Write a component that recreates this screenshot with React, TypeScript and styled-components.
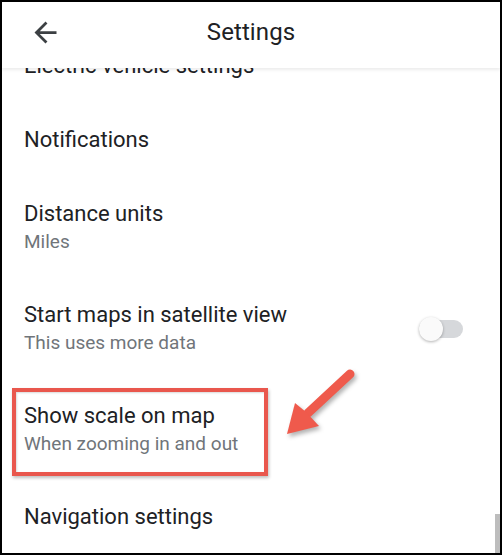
import React from "react"
import styled, { createGlobalStyle } from "styled-components"

const GlobalStyle = createGlobalStyle`
  body {
    margin: 0;
    background: #fff;
    font-family: Roboto, "Noto Sans", Arial, sans-serif;
  }
`
const Frame = styled.div`
  position: relative;
  width: 502px;
  height: 555px;
  box-sizing: border-box;
  border: 2px solid #000;
  background: #fff;
  overflow: hidden;
  display: flex;
  flex-direction: column;
`
const Header = styled.header`
  position: relative;
  z-index: 2;
  height: 66px;
  flex-shrink: 0;
  display: grid;
  grid-template-columns: 1fr auto 1fr;
  align-items: center;
  background: #fff;
  box-shadow: 0 2px 3px rgba(0, 0, 0, 0.08);
`
const BackButton = styled.button`
  justify-self: start;
  margin-left: 27px;
  margin-top: -5px;
  padding: 0;
  border: none;
  background: none;
  display: flex;
  color: #3c4043;
`
const Title = styled.h1`
  margin: -6px 0 0;
  font-size: 24px;
  font-weight: 400;
  color: #202124;
  letter-spacing: 0.1px;
`
const List = styled.ul`
  list-style: none;
  margin: -39px 0 0;
  padding: 0;
`
const Item = styled.li`
  display: flex;
  align-items: center;
  justify-content: space-between;
  padding: 23px 37px 23px 22px;
`
const Texts = styled.div`
  display: flex;
  flex-direction: column;
`
const Highlight = styled.div`
  display: flex;
  flex-direction: column;
  width: 256px;
  box-sizing: border-box;
  margin: -14px 0 -19px -12px;
  padding: 10px 8px 15px;
  border: 4px solid #e9574d;
  box-shadow: 1px 2px 3px rgba(0, 0, 0, 0.25), inset 1px 1px 2px rgba(0, 0, 0, 0.15);
`
const ItemTitle = styled.span`
  font-size: 22px;
  line-height: 28px;
  color: #202124;
`
const ItemSub = styled.span`
  font-size: 19px;
  line-height: 27px;
  color: #70757a;
`
const Track = styled.span<{ on?: boolean }>`
  position: relative;
  display: block;
  width: 44px;
  height: 18px;
  border-radius: 9px;
  background: ${props => (props.on ? "#a8c7fa" : "#d6d8db")};
`
const Knob = styled.span<{ on?: boolean }>`
  position: absolute;
  top: -3px;
  left: ${props => (props.on ? "20px" : "0")};
  width: 24px;
  height: 24px;
  border-radius: 50%;
  background: ${props => (props.on ? "#1a73e8" : "#fafafa")};
  box-shadow: 0 1px 3px rgba(0, 0, 0, 0.3);
`
const Scrollbar = styled.div`
  position: absolute;
  right: 0;
  bottom: 0;
  width: 5px;
  height: 39px;
  background: #bdbdbd;
`
const Arrow = styled.svg`
  position: absolute;
  left: 268px;
  top: 356px;
  filter: drop-shadow(2px 3px 2px rgba(0, 0, 0, 0.3));
`

type Setting = { title: string; sub?: string; toggle?: boolean; highlight?: boolean }

const settings: Setting[] = [
  { title: "Electric vehicle settings" },
  { title: "Notifications" },
  { title: "Distance units", sub: "Miles" },
  { title: "Start maps in satellite view", sub: "This uses more data", toggle: true },
  { title: "Show scale on map", sub: "When zooming in and out", highlight: true },
  { title: "Navigation settings" },
]

function App() {
  return (
    <Frame>
      <GlobalStyle />
      <Header>
        <BackButton aria-label="Back">
          <svg width="33" height="33" viewBox="0 0 24 24" fill="currentColor">
            <path d="M20 11H7.83l5.59-5.59L12 4l-8 8 8 8 1.41-1.41L7.83 13H20v-2z" />
          </svg>
        </BackButton>
        <Title>Settings</Title>
      </Header>
      <List>
        {settings.map(s => {
          const Wrap = s.highlight ? Highlight : Texts
          return (
            <Item key={s.title}>
              <Wrap>
                <ItemTitle>{s.title}</ItemTitle>
                {s.sub ? <ItemSub>{s.sub}</ItemSub> : null}
              </Wrap>
              {s.toggle ? (
                <Track>
                  <Knob />
                </Track>
              ) : null}
            </Item>
          )
        })}
      </List>
      <Arrow width="100" height="92" viewBox="0 0 100 92">
        <line x1="80" y1="16" x2="38" y2="55" stroke="#ef5a4c" strokeWidth="9" strokeLinecap="round" />
        <polygon points="17,76 25,45 36,54 49,68" fill="#ef5a4c" />
      </Arrow>
      <Scrollbar />
    </Frame>
  )
}

export default App
